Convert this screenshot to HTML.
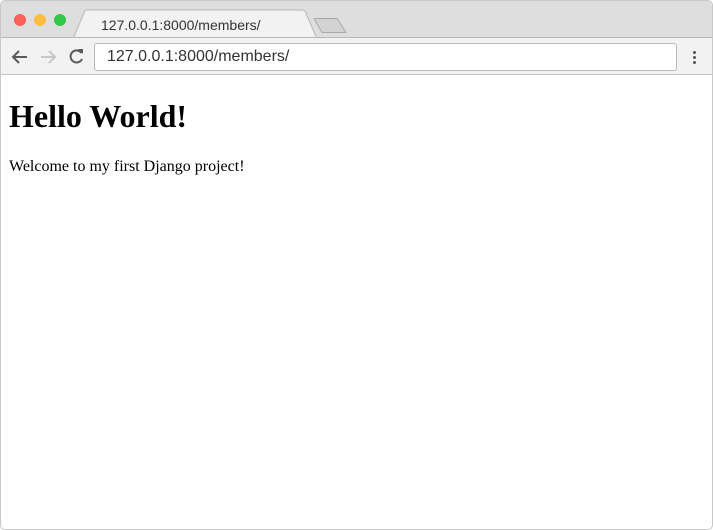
<!DOCTYPE html>
<html><head><style>
body{margin:0;width:713px;height:530px;overflow:hidden;background:#fff;font-family:"Liberation Serif",serif;position:relative}
.win{position:absolute;left:0;top:0;width:711px;height:528px;border:1px solid #c8c8c8;border-radius:5px;overflow:hidden}
.tabs{position:absolute;left:0;top:0;width:711px;height:37px;background:#dedede}
.tool{position:absolute;left:0;top:36px;width:711px;height:36px;background:#f2f2f2;border-bottom:1px solid #c4c4c4;border-top:1px solid #b8b8b8}
.dot{position:absolute;top:13px;width:12px;height:12px;border-radius:50%}
.addr{position:absolute;left:93px;top:5px;background:#fff;border:1px solid #b9b9b9;border-radius:3px;font-family:"Liberation Sans",sans-serif;font-size:16px;color:#333;line-height:26px;padding-left:12px;box-sizing:border-box;width:583px;height:28px}
.content{position:absolute;left:8px;top:76px}
h1{margin:21px 0 0;font-size:32px;line-height:37px}
p{margin:23px 0 0;font-size:16px}
</style></head><body><div class="win">
<div class="tabs">
<div class="dot" style="left:13px;background:#fc605b"></div>
<div class="dot" style="left:33px;background:#fdbc40"></div>
<div class="dot" style="left:53px;background:#34c84a"></div>
<svg style="position:absolute;left:0;top:0" width="713" height="38">
<path d="M72 38 L84 9.5 Q85 9 87 9 L301 9 Q303 9 304 10 L316 38" fill="#f2f2f2" stroke="#b8b8b8"/>
<path d="M313 17.5 L336 17.5 L345 31.5 L321 31.5 Z" fill="#d3d3d3" stroke="#a8a8a8" stroke-linejoin="round"/>
</svg>
<div style="position:absolute;left:100px;top:16px;font-family:'Liberation Sans',sans-serif;font-size:14px;color:#333">127.0.0.1:8000/members/</div>
</div>
<div class="tool">
<svg style="position:absolute;left:0;top:0" width="92" height="36">
<g fill="none" stroke-width="2">
<path d="M26 19 H12 M18 13 L12 19 L18 25" stroke="#5a5a5a"/>
<path d="M40 19 H54 M48 13 L54 19 L48 25" stroke="#c8c8c8"/>
<path d="M80.5 15 A6 6 0 1 0 81 21" stroke="#5a5a5a"/>
</g>
<path d="M77 11 L82 11 L82 16 Z" fill="#5a5a5a"/>
</svg>
<div class="addr">127.0.0.1:8000/members/</div>
<div style="position:absolute;left:692px;top:13px;width:3px;height:3px;background:#555;border-radius:50%;box-shadow:0 5px 0 #555,0 10px 0 #555"></div>
</div>
<div class="content"><h1>Hello World!</h1><p>Welcome to my first Django project!</p></div>
</div></body></html>
